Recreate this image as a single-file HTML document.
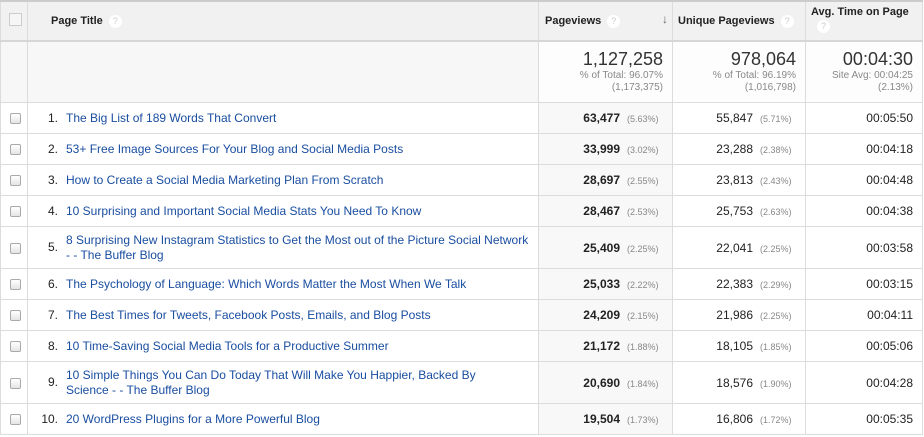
<!DOCTYPE html>
<html><head><meta charset="utf-8"><style>
body{margin:0;background:#fff;font-family:"Liberation Sans",Arial,sans-serif;width:924px;height:437px;overflow:hidden}
table{border-collapse:collapse;table-layout:fixed;position:absolute;left:0;top:0;width:922px}
td,th{border:1px solid #dcdcdc;padding:0;font-size:12px;color:#222}
thead th{background:#f1f1f1;height:34px;font-size:11px;font-weight:bold;text-align:left;vertical-align:middle;border-top:2px solid #ccc;border-bottom:2px solid #d6d6d6}
.q{display:inline-block;width:13px;height:13px;border-radius:50%;background:#fff;color:#ccc;font-size:9px;text-align:center;line-height:13px;margin-left:6px;font-weight:normal}
.cb{display:inline-block;width:9px;height:9px;border:1px solid #aaa;border-radius:2px;background:linear-gradient(#fff,#e4e4e4);margin-left:9px;vertical-align:middle}
.hcb{display:inline-block;width:11px;height:11px;border:1px solid #ccc;background:#f6f6f6;margin-left:8px}
.sum td{background:#f7f7f7;height:60px;text-align:right;vertical-align:top}
.sum td.m{background:#fdfdfd;padding-right:9px}
.big{font-size:18px;color:#333;margin-top:7px;line-height:21px}
.sm{font-size:10px;color:#888;line-height:12px}
tbody.d td{height:30px}
.t{color:#1a4ea0;font-size:12px;line-height:15px;vertical-align:middle}
.n{display:inline-block;width:30px;text-align:right;margin-right:8px;color:#222;vertical-align:top}
.tt{display:inline-block;width:470px;vertical-align:top}
.pv{background:#f8f8f8;text-align:right;padding-right:9px;font-weight:bold}
.r{text-align:right;padding-right:9px}
.p{font-size:9px;color:#888;font-weight:normal;margin-left:7px;display:inline-block;width:36px;text-align:left}
tr.tall td{height:41px}
</style></head><body>
<table>
<colgroup><col style="width:27px"><col style="width:511px"><col style="width:134px"><col style="width:133px"><col style="width:117px"></colgroup>
<thead><tr>
<th><span class="hcb"></span></th>
<th style="padding-left:23px">Page Title<span class="q">?</span></th>
<th style="padding-left:6px;position:relative">Pageviews<span class="q">?</span><span style="position:absolute;right:4px;top:10px;color:#666;font-size:12px">↓</span></th>
<th style="padding-left:5px">Unique Pageviews<span class="q">?</span></th>
<th style="padding-left:5px;vertical-align:top;padding-top:4px">Avg. Time on Page<br><span class="q" style="margin:2px 0 0 6px">?</span></th>
</tr></thead>
<tbody class="sum"><tr><td></td><td></td>
<td class="m"><div class="big">1,127,258</div><div class="sm">% of Total: 96.07%<br>(1,173,375)</div></td>
<td class="m"><div class="big">978,064</div><div class="sm">% of Total: 96.19%<br>(1,016,798)</div></td>
<td class="m"><div class="big">00:04:30</div><div class="sm">Site Avg: 00:04:25<br>(2.13%)</div></td></tr></tbody>
<tbody class="d">
<tr><td><span class="cb"></span></td><td class="t"><span class="n">1.</span><span class="tt">The Big List of 189 Words That Convert</span></td><td class="pv">63,477<span class="p">(5.63%)</span></td><td class="r">55,847<span class="p">(5.71%)</span></td><td class="r">00:05:50</td></tr>
<tr><td><span class="cb"></span></td><td class="t"><span class="n">2.</span><span class="tt">53+ Free Image Sources For Your Blog and Social Media Posts</span></td><td class="pv">33,999<span class="p">(3.02%)</span></td><td class="r">23,288<span class="p">(2.38%)</span></td><td class="r">00:04:18</td></tr>
<tr><td><span class="cb"></span></td><td class="t"><span class="n">3.</span><span class="tt">How to Create a Social Media Marketing Plan From Scratch</span></td><td class="pv">28,697<span class="p">(2.55%)</span></td><td class="r">23,813<span class="p">(2.43%)</span></td><td class="r">00:04:48</td></tr>
<tr><td><span class="cb"></span></td><td class="t"><span class="n">4.</span><span class="tt">10 Surprising and Important Social Media Stats You Need To Know</span></td><td class="pv">28,467<span class="p">(2.53%)</span></td><td class="r">25,753<span class="p">(2.63%)</span></td><td class="r">00:04:38</td></tr>
<tr class="tall"><td><span class="cb"></span></td><td class="t"><span class="n" style="vertical-align:middle">5.</span><span class="tt" style="vertical-align:middle">8 Surprising New Instagram Statistics to Get the Most out of the Picture Social Network<br>- - The Buffer Blog</span></td><td class="pv">25,409<span class="p">(2.25%)</span></td><td class="r">22,041<span class="p">(2.25%)</span></td><td class="r">00:03:58</td></tr>
<tr><td><span class="cb"></span></td><td class="t"><span class="n">6.</span><span class="tt">The Psychology of Language: Which Words Matter the Most When We Talk</span></td><td class="pv">25,033<span class="p">(2.22%)</span></td><td class="r">22,383<span class="p">(2.29%)</span></td><td class="r">00:03:15</td></tr>
<tr><td><span class="cb"></span></td><td class="t"><span class="n">7.</span><span class="tt">The Best Times for Tweets, Facebook Posts, Emails, and Blog Posts</span></td><td class="pv">24,209<span class="p">(2.15%)</span></td><td class="r">21,986<span class="p">(2.25%)</span></td><td class="r">00:04:11</td></tr>
<tr><td><span class="cb"></span></td><td class="t"><span class="n">8.</span><span class="tt">10 Time-Saving Social Media Tools for a Productive Summer</span></td><td class="pv">21,172<span class="p">(1.88%)</span></td><td class="r">18,105<span class="p">(1.85%)</span></td><td class="r">00:05:06</td></tr>
<tr class="tall"><td><span class="cb"></span></td><td class="t"><span class="n" style="vertical-align:middle">9.</span><span class="tt" style="vertical-align:middle">10 Simple Things You Can Do Today That Will Make You Happier, Backed By<br>Science - - The Buffer Blog</span></td><td class="pv">20,690<span class="p">(1.84%)</span></td><td class="r">18,576<span class="p">(1.90%)</span></td><td class="r">00:04:28</td></tr>
<tr><td><span class="cb"></span></td><td class="t"><span class="n">10.</span><span class="tt">20 WordPress Plugins for a More Powerful Blog</span></td><td class="pv">19,504<span class="p">(1.73%)</span></td><td class="r">16,806<span class="p">(1.72%)</span></td><td class="r">00:05:35</td></tr>
</tbody></table>
</body></html>
